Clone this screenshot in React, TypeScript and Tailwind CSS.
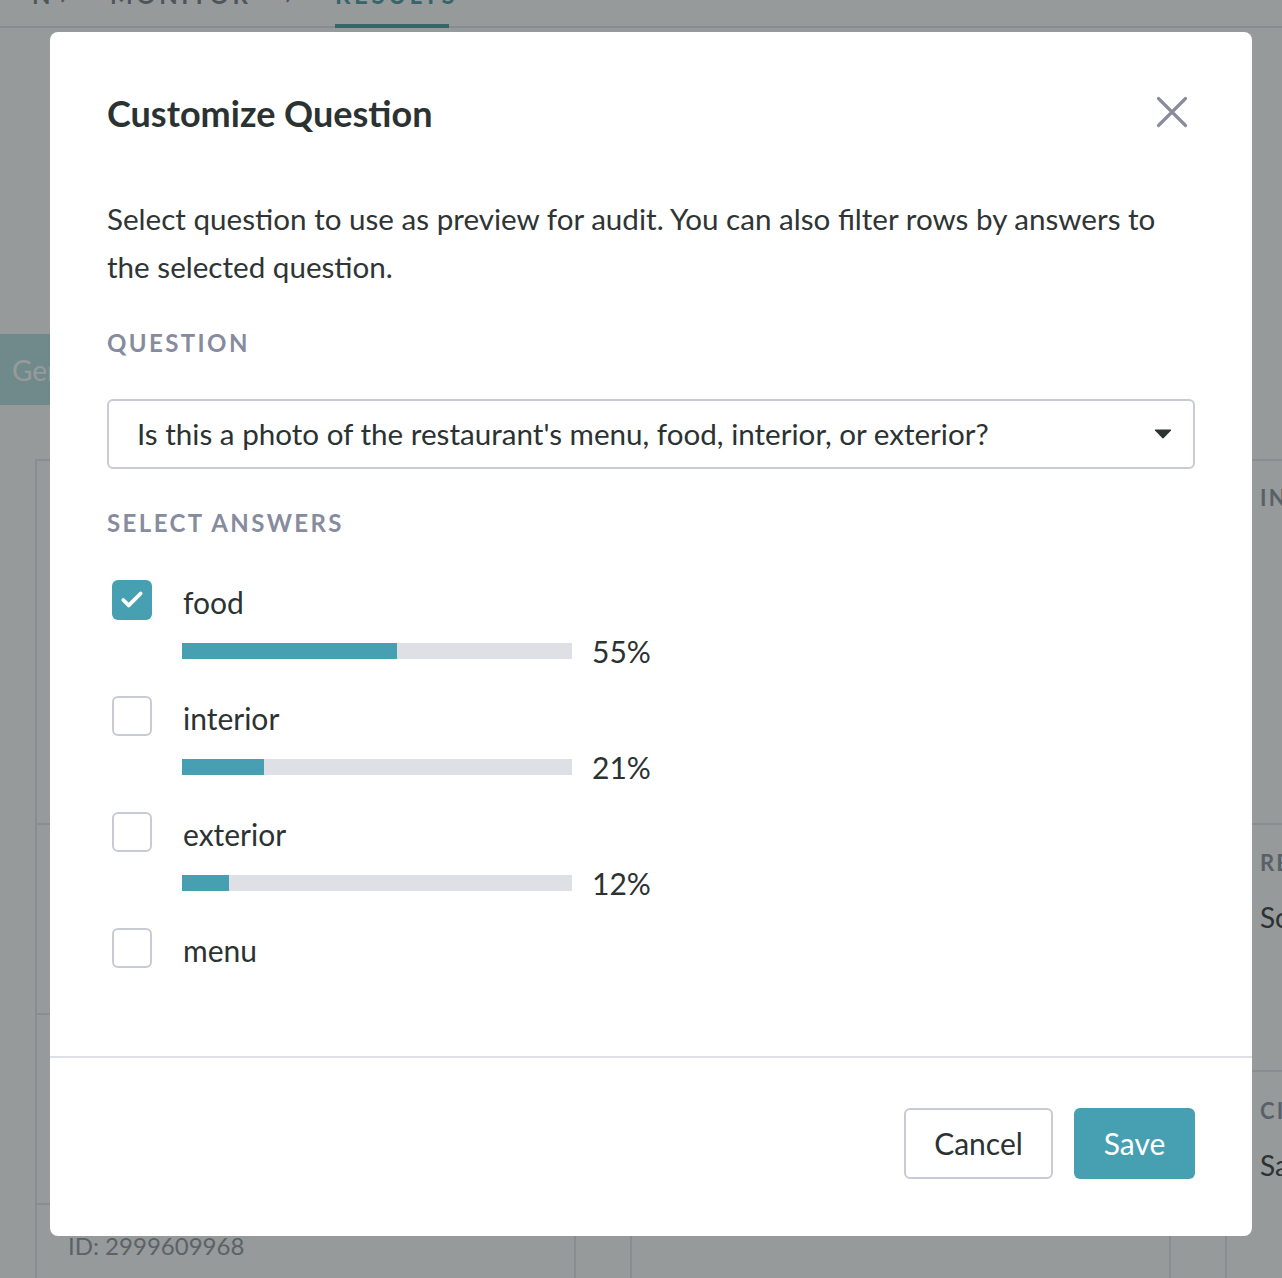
import { Check } from 'lucide-react';

const answers = [
  { label: 'food', pct: 55, checked: true },
  { label: 'interior', pct: 21, checked: false },
  { label: 'exterior', pct: 12, checked: false },
  { label: 'menu', pct: null as number | null, checked: false },
];

const Checkbox = ({ checked }: { checked: boolean }) =>
  checked ? (
    <div className="w-[40px] h-[40px] rounded-[6px] bg-[#47a0b2] flex items-center justify-center">
      <Check className="w-[26px] h-[26px] text-white" strokeWidth={3.5} />
    </div>
  ) : (
    <div className="w-[40px] h-[40px] rounded-[6px] border-2 border-[#c9cbd4] bg-white" />
  );

// Page behind the dialog
const BackgroundPage = () => (
  <div className="h-[1278px] bg-white overflow-hidden">
    {/* tab bar, mostly scrolled off the top */}
    <div className="h-[28px] border-b-2 border-[#e3e6e7] flex items-start text-[24px] font-bold tracking-[0.15em] text-[#7b8488] leading-[24px]">
      <span className="w-[58px] -mt-[17px] text-right pr-[4px]">N</span>
      <span className="w-[52px] -mt-[17px] pl-[2px]">›</span>
      <span className="w-[175px] -mt-[17px]">MONITOR</span>
      <span className="w-[50px] -mt-[17px]">›</span>
      <span className="h-[28px] w-[114px] border-b-4 border-[#50a0a4] text-[#50a0a4]">
        <span className="block -mt-[17px]">RESULTS</span>
      </span>
    </div>
    <div className="mt-[306px] h-[71px] w-[180px] bg-[#b8e2e2] text-white text-[28px] flex items-center pl-[12px]">
      Generate
    </div>
    <div className="mt-[54px] ml-[35px] grid grid-cols-[541px_541px_541px] gap-x-[54px]">
      <div className="border-2 border-[#e6e8e9] h-[900px]">
        <div className="h-[364px] border-b-2 border-[#e6e8e9]" />
        <div className="h-[190px] border-b-2 border-[#e6e8e9]" />
        <div className="h-[190px] border-b-2 border-[#e6e8e9]" />
        <div className="pl-[31px] pt-[23px] text-[24px] text-[#939aa0]">ID: 2999609968</div>
      </div>
      <div className="border-2 border-[#e6e8e9] h-[900px]" />
      <div className="border-2 border-[#e6e8e9] h-[900px]">
        <div className="h-[364px] border-b-2 border-[#e6e8e9] pl-[33px] pt-[20px] text-[22px] font-bold tracking-[0.1em] text-[#8f97a3]">
          INFO
        </div>
        <div className="h-[247px] border-b-2 border-[#e6e8e9] pl-[33px] pt-[21px]">
          <div className="text-[22px] font-bold tracking-[0.1em] text-[#8f97a3]">RESULT</div>
          <div className="mt-[17px] text-[28px] text-[#3c4142]">Some</div>
        </div>
        <div className="pl-[33px] pt-[22px]">
          <div className="text-[22px] font-bold tracking-[0.1em] text-[#8f97a3]">CITY</div>
          <div className="mt-[17px] text-[28px] text-[#3c4142]">San</div>
        </div>
      </div>
    </div>
  </div>
);

export default function App() {
  return (
    <div className="relative w-[1282px] h-[1278px] overflow-hidden font-['Lato',sans-serif]">
      <BackgroundPage />
      <div className="absolute inset-0 bg-[rgba(24,30,33,0.45)]" />

      <div className="absolute left-[50px] top-[32px] w-[1202px] h-[1204px] bg-white rounded-[8px] flex flex-col">
        <div className="flex-1 px-[57px] pt-[61px]">
          <div className="flex items-center justify-between h-[40px]">
            <h2 className="text-[36px] font-bold text-[#2b3232] leading-[40px]">Customize Question</h2>
            <svg width="32" height="32" viewBox="0 0 32 32" className="mr-[7px] mb-[2px]">
              <path d="M2.5 2.5 L29.5 29.5 M29.5 2.5 L2.5 29.5" stroke="#8a8c9c" strokeWidth="3.2" strokeLinecap="round" />
            </svg>
          </div>

          <p className="mt-[62px] text-[29.6px] leading-[48px] text-[#2f3434]">
            Select question to use as preview for audit. You can also filter rows by answers to the selected
            question.
          </p>

          <div className="mt-[38px] text-[24px] leading-[28px] font-bold tracking-[0.1em] text-[#868b9e]">
            QUESTION
          </div>

          <div className="mt-[42px] h-[70px] rounded-[6px] border-2 border-[#c9cbd4] flex items-center justify-between pl-[28px] pr-[21px]">
            <span className="text-[29.6px] text-[#2b3232]">
              Is this a photo of the restaurant's menu, food, interior, or exterior?
            </span>
            <svg width="18" height="10" viewBox="0 0 18 10">
              <path d="M1 1.5 Q0.5 0.5 1.8 0.5 H16.2 Q17.5 0.5 17 1.5 L9.8 9 Q9 9.8 8.2 9 Z" fill="#2b3232" />
            </svg>
          </div>

          <div className="mt-[40px] text-[24px] leading-[28px] font-bold tracking-[0.1em] text-[#868b9e]">
            SELECT ANSWERS
          </div>

          <div className="mt-[43px] flex flex-col gap-[30px]">
            {answers.map((a) => (
              <div key={a.label} className="flex flex-col">
                <div className="flex items-center h-[40px] pl-[5px]">
                  <Checkbox checked={a.checked} />
                  <span className="ml-[31px] text-[30px] text-[#2b3232] leading-[40px] mt-[4px]">{a.label}</span>
                </div>
                {a.pct !== null && (
                  <div className="mt-[16px] h-[30px] flex items-center pl-[75px]">
                    <div className="w-[390px] h-[16px] bg-[#dfe0e5]">
                      <div className="h-full bg-[#47a0b2]" style={{ width: `${a.pct}%` }} />
                    </div>
                    <span className="ml-[20px] text-[30px] text-[#2b3232]">{a.pct}%</span>
                  </div>
                )}
              </div>
            ))}
          </div>
        </div>

        <div className="h-[180px] border-t-2 border-[#dfe0e5] flex items-start justify-end gap-[21px] px-[57px] pt-[50px]">
          <button className="h-[71px] w-[149px] rounded-[6px] border-2 border-[#c9cbd4] bg-white text-[30px] text-[#2b3232]">
            Cancel
          </button>
          <button className="h-[71px] w-[121px] rounded-[6px] bg-[#47a0b2] text-[30px] text-white">Save</button>
        </div>
      </div>
    </div>
  );
}
